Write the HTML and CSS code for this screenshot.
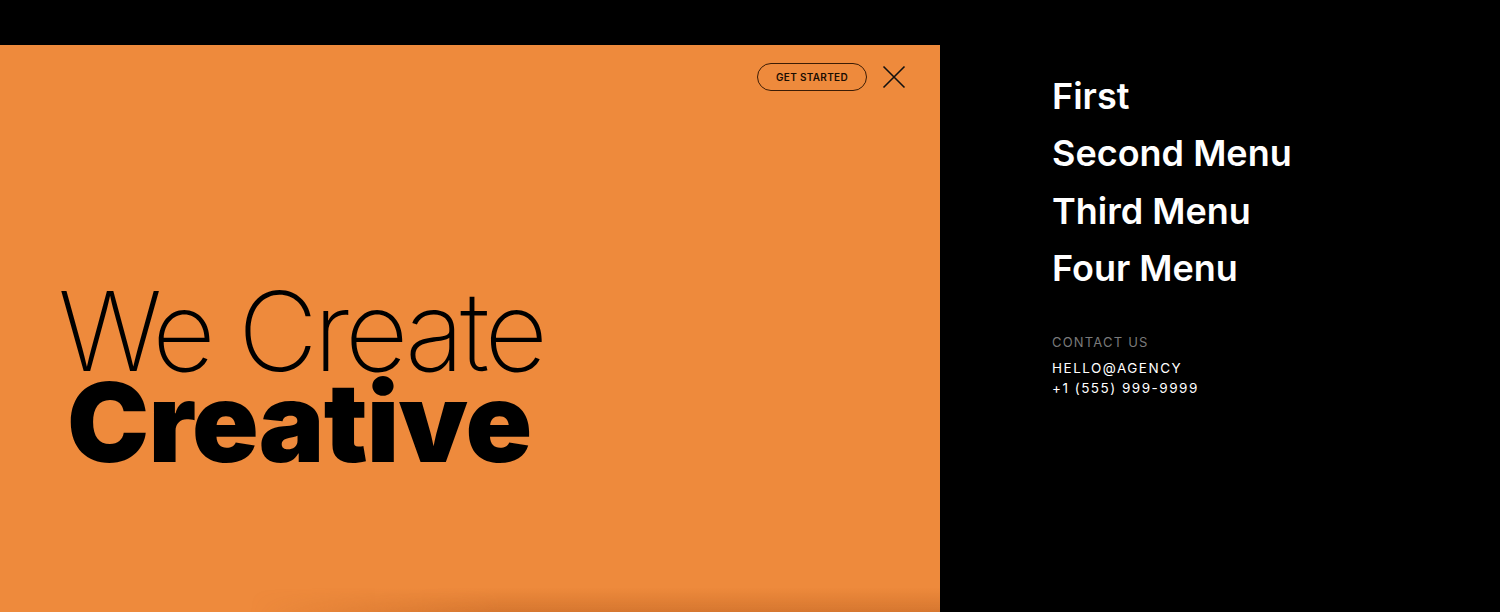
FILE: index.html
```html
<!DOCTYPE html>
<html>
<head>
<meta charset="utf-8">
<link rel="stylesheet" href="styles.css">
</head>
<body>
<div class="page">
  <div class="topbar"></div>
  <div class="main">
    <section class="hero">
      <div class="hero-top">
        <button class="cta">GET STARTED</button>
        <button class="close" aria-label="Close">
          <svg width="24" height="24" viewBox="0 0 24 24"><path d="M1.5 1.5 L22.5 22.5 M22.5 1.5 L1.5 22.5" stroke="#111" stroke-width="1.6" fill="none"/></svg>
        </button>
      </div>
      <h1 class="headline">
        <span class="light">We Create</span>
        <span class="bold">Creative</span>
      </h1>
      <div class="shade"></div>
    </section>
    <nav class="menu">
      <ul class="menu-list">
        <li>First</li>
        <li>Second Menu</li>
        <li>Third Menu</li>
        <li>Four Menu</li>
      </ul>
      <div class="contact">
        <div class="contact-label">CONTACT US</div>
        <div class="contact-line">HELLO@AGENCY</div>
        <div class="contact-line">+1 (555) 999-9999</div>
      </div>
    </nav>
  </div>
</div>
</body>
</html>
```
FILE: styles.css
```css
* { box-sizing: border-box; }
html, body { margin: 0; padding: 0; }
body {
  background: #000;
  font-family: Inter, "Noto Sans", sans-serif;
  width: 1500px;
  height: 612px;
  overflow: hidden;
}
.page { display: flex; flex-direction: column; height: 612px; }
.topbar { height: 45px; flex: none; background: #000; }
.main { flex: 1; display: flex; }
.hero {
  width: 940px;
  flex: none;
  background: #ee8a3c;
  position: relative;
  display: flex;
  flex-direction: column;
  overflow: hidden;
}
.hero-top {
  display: flex;
  justify-content: flex-end;
  align-items: center;
  gap: 15px;
  padding: 18px 34px 0 0;
}
.cta {
  height: 28px;
  width: 110px;
  border: 1px solid #3b1c05;
  border-radius: 14px;
  background: transparent;
  font-family: Inter, sans-serif;
  font-size: 10px;
  font-weight: 600;
  letter-spacing: 0.3px;
  color: #1a0d02;
  padding: 0;
}
.close {
  background: none;
  border: 0;
  padding: 0;
  width: 24px;
  height: 24px;
  display: flex;
}
.headline {
  margin: 195px 0 0 58px;
  display: flex;
  flex-direction: column;
  font-weight: normal;
  color: #000;
}
.headline .light {
  font-size: 110px;
  font-weight: 200;
  line-height: 91px;
  letter-spacing: -4.3px;
}
.headline .bold {
  font-size: 110px;
  font-weight: 900;
  line-height: 91px;
  letter-spacing: -0.8px;
  margin: 0 0 0 9px;
}
.shade {
  position: absolute;
  left: 250px;
  right: 0;
  bottom: 0;
  height: 24px;
  background: linear-gradient(to bottom, rgba(160,75,20,0), rgba(160,75,20,0.3));
  -webkit-mask-image: linear-gradient(to right, transparent 0, #000 250px);
  mask-image: linear-gradient(to right, transparent 0, #000 250px);
}
.menu {
  flex: 1;
  padding: 23px 0 0 112px;
  color: #fff;
}
.menu-list {
  list-style: none;
  margin: 0;
  padding: 0;
}
.menu-list li {
  font-size: 36px;
  font-weight: 600;
  line-height: 57.3px;
  letter-spacing: 0;
}
.contact { margin-top: 37px; }
.contact-label {
  font-size: 13px;
  color: #7a7a7a;
  letter-spacing: 1.2px;
  margin-bottom: 8px;
}
.contact-line {
  font-size: 13.5px;
  letter-spacing: 1.5px;
  line-height: 20px;
  color: #fff;
}
```
